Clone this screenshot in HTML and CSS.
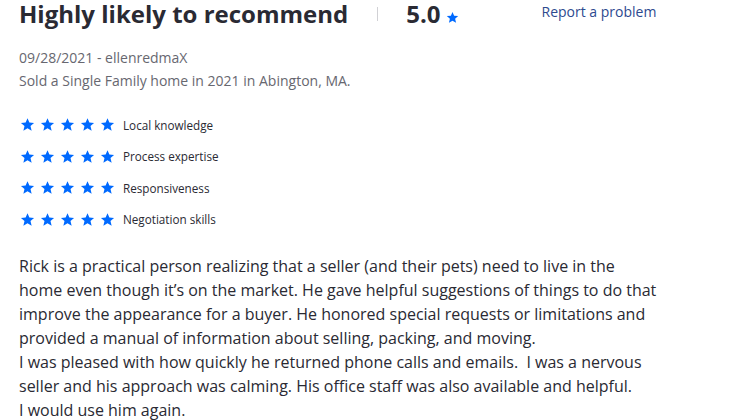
FILE: index.html
```html
<!DOCTYPE html>
<html>
<head>
<meta charset="utf-8">
<link rel="stylesheet" href="styles.css">
</head>
<body>
<div class="review">
  <div class="header">
    <h2 class="title">Highly likely to recommend</h2>
    <span class="sep"></span>
    <span class="score">5.0</span>
    <svg class="star small" viewBox="0 0 24 24"><path d="M12 1.8l3 7 7.5.6-5.7 5 1.8 7.4L12 17.8l-6.6 4 1.8-7.4-5.7-5 7.5-.6z"/></svg>
    <a class="report" href="#">Report a problem</a>
  </div>
  <div class="meta first">09/28/2021 - ellenredmaX</div>
  <div class="meta">Sold a Single Family home in 2021 in Abington, MA.</div>
  <ul class="ratings">
    <li><span class="stars"><svg class="star" viewBox="0 0 24 24"><path d="M12 1.8l3 7 7.5.6-5.7 5 1.8 7.4L12 17.8l-6.6 4 1.8-7.4-5.7-5 7.5-.6z"/></svg><svg class="star" viewBox="0 0 24 24"><path d="M12 1.8l3 7 7.5.6-5.7 5 1.8 7.4L12 17.8l-6.6 4 1.8-7.4-5.7-5 7.5-.6z"/></svg><svg class="star" viewBox="0 0 24 24"><path d="M12 1.8l3 7 7.5.6-5.7 5 1.8 7.4L12 17.8l-6.6 4 1.8-7.4-5.7-5 7.5-.6z"/></svg><svg class="star" viewBox="0 0 24 24"><path d="M12 1.8l3 7 7.5.6-5.7 5 1.8 7.4L12 17.8l-6.6 4 1.8-7.4-5.7-5 7.5-.6z"/></svg><svg class="star" viewBox="0 0 24 24"><path d="M12 1.8l3 7 7.5.6-5.7 5 1.8 7.4L12 17.8l-6.6 4 1.8-7.4-5.7-5 7.5-.6z"/></svg></span><span class="label">Local knowledge</span></li>
    <li><span class="stars"><svg class="star" viewBox="0 0 24 24"><path d="M12 1.8l3 7 7.5.6-5.7 5 1.8 7.4L12 17.8l-6.6 4 1.8-7.4-5.7-5 7.5-.6z"/></svg><svg class="star" viewBox="0 0 24 24"><path d="M12 1.8l3 7 7.5.6-5.7 5 1.8 7.4L12 17.8l-6.6 4 1.8-7.4-5.7-5 7.5-.6z"/></svg><svg class="star" viewBox="0 0 24 24"><path d="M12 1.8l3 7 7.5.6-5.7 5 1.8 7.4L12 17.8l-6.6 4 1.8-7.4-5.7-5 7.5-.6z"/></svg><svg class="star" viewBox="0 0 24 24"><path d="M12 1.8l3 7 7.5.6-5.7 5 1.8 7.4L12 17.8l-6.6 4 1.8-7.4-5.7-5 7.5-.6z"/></svg><svg class="star" viewBox="0 0 24 24"><path d="M12 1.8l3 7 7.5.6-5.7 5 1.8 7.4L12 17.8l-6.6 4 1.8-7.4-5.7-5 7.5-.6z"/></svg></span><span class="label">Process expertise</span></li>
    <li><span class="stars"><svg class="star" viewBox="0 0 24 24"><path d="M12 1.8l3 7 7.5.6-5.7 5 1.8 7.4L12 17.8l-6.6 4 1.8-7.4-5.7-5 7.5-.6z"/></svg><svg class="star" viewBox="0 0 24 24"><path d="M12 1.8l3 7 7.5.6-5.7 5 1.8 7.4L12 17.8l-6.6 4 1.8-7.4-5.7-5 7.5-.6z"/></svg><svg class="star" viewBox="0 0 24 24"><path d="M12 1.8l3 7 7.5.6-5.7 5 1.8 7.4L12 17.8l-6.6 4 1.8-7.4-5.7-5 7.5-.6z"/></svg><svg class="star" viewBox="0 0 24 24"><path d="M12 1.8l3 7 7.5.6-5.7 5 1.8 7.4L12 17.8l-6.6 4 1.8-7.4-5.7-5 7.5-.6z"/></svg><svg class="star" viewBox="0 0 24 24"><path d="M12 1.8l3 7 7.5.6-5.7 5 1.8 7.4L12 17.8l-6.6 4 1.8-7.4-5.7-5 7.5-.6z"/></svg></span><span class="label">Responsiveness</span></li>
    <li><span class="stars"><svg class="star" viewBox="0 0 24 24"><path d="M12 1.8l3 7 7.5.6-5.7 5 1.8 7.4L12 17.8l-6.6 4 1.8-7.4-5.7-5 7.5-.6z"/></svg><svg class="star" viewBox="0 0 24 24"><path d="M12 1.8l3 7 7.5.6-5.7 5 1.8 7.4L12 17.8l-6.6 4 1.8-7.4-5.7-5 7.5-.6z"/></svg><svg class="star" viewBox="0 0 24 24"><path d="M12 1.8l3 7 7.5.6-5.7 5 1.8 7.4L12 17.8l-6.6 4 1.8-7.4-5.7-5 7.5-.6z"/></svg><svg class="star" viewBox="0 0 24 24"><path d="M12 1.8l3 7 7.5.6-5.7 5 1.8 7.4L12 17.8l-6.6 4 1.8-7.4-5.7-5 7.5-.6z"/></svg><svg class="star" viewBox="0 0 24 24"><path d="M12 1.8l3 7 7.5.6-5.7 5 1.8 7.4L12 17.8l-6.6 4 1.8-7.4-5.7-5 7.5-.6z"/></svg></span><span class="label">Negotiation skills</span></li>
  </ul>
  <p class="body">Rick is a practical person realizing that a seller (and their pets) need to live in the home even though it’s on the market. He gave helpful suggestions of things to do that improve the appearance for a buyer. He honored special requests or limitations and provided a manual of information about selling, packing, and moving.<br>I was pleased with how quickly he returned phone calls and emails.&nbsp; I was a nervous seller and his approach was calming. His office staff was also available and helpful.<br>I would use him again.</p>
</div>
</body>
</html>
```

FILE: styles.css
```css
* { box-sizing: border-box; }
html, body { margin: 0; padding: 0; background: #fff; }
body {
  font-family: "Open Sans", "Noto Sans", sans-serif;
  color: #2a2a33;
}
.review {
  padding: 0 19px;
  width: 680px;
}
.header {
  display: flex;
  align-items: center;
  height: 28px;
  white-space: nowrap;
}
.header > * { flex-shrink: 0; }
.title {
  margin: 0;
  font-size: 24px;
  font-weight: 700;
  line-height: 28px;
  color: #2a2a33;
}
.sep {
  width: 1px;
  height: 14px;
  background: #d1d1d5;
  margin: 0 28px 0 29px;
}
.score {
  font-size: 24px;
  font-weight: 700;
  line-height: 28px;
}
.star {
  width: 15px;
  height: 15px;
  fill: #006aff;
  display: block;
}
.star.small {
  width: 13px;
  height: 13px;
  margin: 6px 0 0 5px;
}
.report {
  margin-left: 83px;
  margin-top: -5px;
  font-size: 14px;
  color: #2d4a8f;
  text-decoration: none;
}
.meta {
  font-size: 14px;
  line-height: 23px;
  color: #676770;
}
.meta.first { margin-top: 18px; }
.ratings {
  list-style: none;
  margin: 17px 0 0;
  padding: 0;
}
.ratings li {
  display: flex;
  align-items: center;
  height: 31.5px;
}
.stars {
  display: flex;
  gap: 5px;
  margin-left: 1px;
}
.label {
  margin-left: 8px;
  font-size: 11.7px;
  color: #2a2a33;
}
.body {
  margin: 19px 0 0;
  font-size: 16px;
  line-height: 24px;
  color: #2a2a33;
}
```
